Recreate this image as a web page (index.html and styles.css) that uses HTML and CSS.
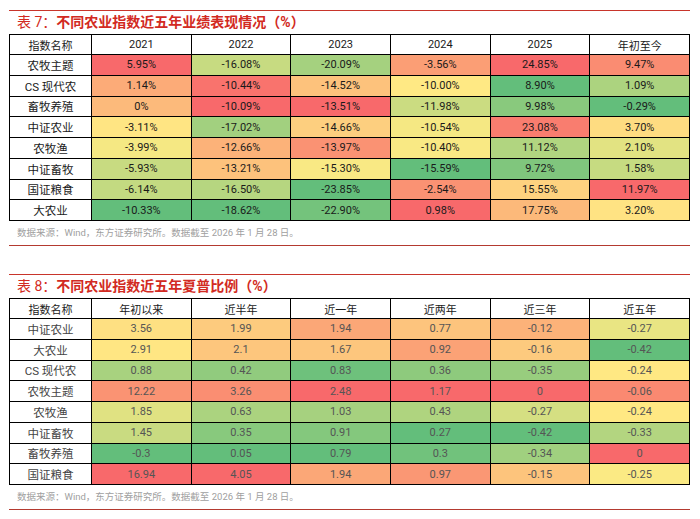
FILE: index.html
```html
<!DOCTYPE html>
<html lang="zh-CN">
<head>
<meta charset="utf-8">
<title>农业指数</title>
<link rel="stylesheet" href="styles.css">
</head>
<body>
<div class="page">
  <section class="exhibit">
    <h2 class="caption"><span class="num">表 7：</span>不同农业指数近五年业绩表现情况（%）</h2>
    <table class="heat t1">
      <colgroup><col class="c-name"><col><col><col><col><col><col></colgroup>
      <thead>
        <tr><th>指数名称</th><th>2021</th><th>2022</th><th>2023</th><th>2024</th><th>2025</th><th>年初至今</th></tr>
      </thead>
      <tbody>
        <tr><td>农牧主题</td><td>5.95%</td><td>-16.08%</td><td>-20.09%</td><td>-3.56%</td><td>24.85%</td><td>9.47%</td></tr>
        <tr><td>CS 现代农</td><td>1.14%</td><td>-10.44%</td><td>-14.52%</td><td>-10.00%</td><td>8.90%</td><td>1.09%</td></tr>
        <tr><td>畜牧养殖</td><td>0%</td><td>-10.09%</td><td>-13.51%</td><td>-11.98%</td><td>9.98%</td><td>-0.29%</td></tr>
        <tr><td>中证农业</td><td>-3.11%</td><td>-17.02%</td><td>-14.66%</td><td>-10.54%</td><td>23.08%</td><td>3.70%</td></tr>
        <tr><td>农牧渔</td><td>-3.99%</td><td>-12.66%</td><td>-13.97%</td><td>-10.40%</td><td>11.12%</td><td>2.10%</td></tr>
        <tr><td>中证畜牧</td><td>-5.93%</td><td>-13.21%</td><td>-15.30%</td><td>-15.59%</td><td>9.72%</td><td>1.58%</td></tr>
        <tr><td>国证粮食</td><td>-6.14%</td><td>-16.50%</td><td>-23.85%</td><td>-2.54%</td><td>15.55%</td><td>11.97%</td></tr>
        <tr><td>大农业</td><td>-10.33%</td><td>-18.62%</td><td>-22.90%</td><td>0.98%</td><td>17.75%</td><td>3.20%</td></tr>
      </tbody>
    </table>
    <p class="source">数据来源：Wind，东方证券研究所。数据截至 2026 年 1 月 28 日。</p>
  </section>

  <section class="exhibit">
    <h2 class="caption"><span class="num">表 8：</span>不同农业指数近五年夏普比例（%）</h2>
    <table class="heat t2">
      <colgroup><col class="c-name"><col><col><col><col><col><col></colgroup>
      <thead>
        <tr><th>指数名称</th><th>年初以来</th><th>近半年</th><th>近一年</th><th>近两年</th><th>近三年</th><th>近五年</th></tr>
      </thead>
      <tbody>
        <tr><td>中证农业</td><td>3.56</td><td>1.99</td><td>1.94</td><td>0.77</td><td>-0.12</td><td>-0.27</td></tr>
        <tr><td>大农业</td><td>2.91</td><td>2.1</td><td>1.67</td><td>0.92</td><td>-0.16</td><td>-0.42</td></tr>
        <tr><td>CS 现代农</td><td>0.88</td><td>0.42</td><td>0.83</td><td>0.36</td><td>-0.35</td><td>-0.24</td></tr>
        <tr><td>农牧主题</td><td>12.22</td><td>3.26</td><td>2.48</td><td>1.17</td><td>0</td><td>-0.06</td></tr>
        <tr><td>农牧渔</td><td>1.85</td><td>0.63</td><td>1.03</td><td>0.43</td><td>-0.27</td><td>-0.24</td></tr>
        <tr><td>中证畜牧</td><td>1.45</td><td>0.35</td><td>0.91</td><td>0.27</td><td>-0.42</td><td>-0.33</td></tr>
        <tr><td>畜牧养殖</td><td>-0.3</td><td>0.05</td><td>0.79</td><td>0.3</td><td>-0.34</td><td>0</td></tr>
        <tr><td>国证粮食</td><td>16.94</td><td>4.05</td><td>1.94</td><td>0.97</td><td>-0.15</td><td>-0.25</td></tr>
      </tbody>
    </table>
    <p class="source">数据来源：Wind，东方证券研究所。数据截至 2026 年 1 月 28 日。</p>
  </section>
</div>
<script src="script.js"></script>
</body>
</html>
```

FILE: styles.css
```css
html, body {
  margin: 0;
  background: #ffffff;
}
body {
  font-family: Roboto, "Noto Sans CJK SC", sans-serif;
  color: #1a1a1a;
}
.page {
  width: 681px;
  padding: 10px 0 0 9px;
}
.exhibit {
  border-top: 1px solid #c8352b;
  border-bottom: 1px solid #b43a30;
}
.exhibit + .exhibit {
  margin-top: 28px;
}
.caption {
  margin: 0;
  height: 23px;
  line-height: 23px;
  padding-left: 8px;
  font-size: 14px;
  font-weight: bold;
  color: #d22a22;
  white-space: nowrap;
}
.caption .num {
  font-weight: normal;
}
.heat {
  width: 681px;
  border-collapse: collapse;
  table-layout: fixed;
  border: 1px solid #000;
}
.heat .c-name {
  width: 82px;
}
.heat th,
.heat td {
  border: 1px solid #000;
  padding: 0;
  text-align: center;
  font-size: 11px;
  font-weight: normal;
  white-space: nowrap;
}
.heat th {
  height: 19px;
  background: #ffffff;
  color: #1a1a1a;
}
.heat td {
  height: 19.75px;
}
.heat td:first-child {
  background: #ffffff;
  font-size: 11.5px;
}
.t2 td {
  color: #555555;
}
.t2 td:first-child {
  color: #444444;
}
.source {
  margin: 0;
  height: 24px;
  line-height: 24px;
  padding-left: 8px;
  font-size: 9.5px;
  color: #a0a0a0;
  white-space: nowrap;
}
```

FILE: script.js
```js
(function () {
  var G = [99, 190, 123];
  var Y = [255, 235, 132];
  var R = [248, 105, 107];
  function mix(a, b, f) {
    return 'rgb(' + a.map(function (x, i) { return Math.round(x + (b[i] - x) * f); }).join(',') + ')';
  }
  document.querySelectorAll('table.heat').forEach(function (t) {
    var rows = Array.prototype.slice.call(t.tBodies[0].rows);
    var ncol = rows[0].cells.length;
    for (var c = 1; c < ncol; c++) {
      var vals = rows.map(function (r) { return parseFloat(r.cells[c].textContent); });
      var s = vals.slice().sort(function (a, b) { return a - b; });
      var min = s[0], max = s[s.length - 1];
      var pos = (s.length - 1) * 0.5, lo = Math.floor(pos), hi = Math.ceil(pos);
      var mid = s[lo] + (s[hi] - s[lo]) * (pos - lo);
      rows.forEach(function (r, i) {
        var v = vals[i], col;
        if (v >= mid) {
          col = mix(Y, R, max === mid ? 0 : (v - mid) / (max - mid));
        } else {
          col = mix(Y, G, mid === min ? 0 : (mid - v) / (mid - min));
        }
        r.cells[c].style.backgroundColor = col;
      });
    }
  });
})();
```
